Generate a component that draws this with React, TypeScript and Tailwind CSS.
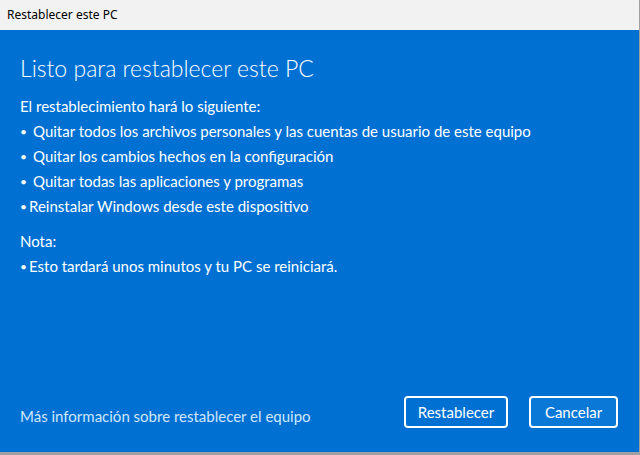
import React from 'react';

const font = { fontFamily: 'Lato, "Noto Sans", sans-serif' };

const Item = ({ gap, children }: { gap: string; children: React.ReactNode }) => (
  <p className="flex">
    <span className={`${gap} text-[12px] leading-[25px]`}>•</span>
    <span>{children}</span>
  </p>
);

export default function App() {
  return (
    <div className="w-[640px] h-[455px] bg-[#a0a0a0] flex flex-col" style={font}>
      <div className="w-[639px] h-[452px] flex flex-col">
        <div className="h-[30px] bg-[#f2f2f2] flex items-center px-[7px] text-[12px] text-black" style={{ fontFamily: '"Noto Sans", sans-serif' }}>
          Restablecer este PC
        </div>
        <div className="flex-1 bg-[#0071d3] text-white flex flex-col px-[20px]">
          <h1 className="mt-[20px] text-[23px] font-light leading-[36px]">Listo para restablecer este PC</h1>
          <div className="mt-[8px] text-[15px] leading-[25px]">
            <p>El restablecimiento hará lo siguiente:</p>
            <Item gap="w-[13px]">Quitar todos los archivos personales y las cuentas de usuario de este equipo</Item>
            <Item gap="w-[13px]">Quitar los cambios hechos en la configuración</Item>
            <Item gap="w-[13px]">Quitar todas las aplicaciones y programas</Item>
            <Item gap="w-[9px]">Reinstalar Windows desde este dispositivo</Item>
            <p className="mt-[10px]">Nota:</p>
            <Item gap="w-[9px]">Esto tardará unos minutos y tu PC se reiniciará.</Item>
          </div>
          <div className="mt-auto mb-[24px] flex items-center">
            <span className="text-[15px] text-[#cfe6fb] flex-1 pt-[8px]">Más información sobre restablecer el equipo</span>
            <button className="w-[104px] h-[32px] border-2 border-white rounded-[4px] text-[15px] text-white">Restablecer</button>
            <button className="ml-[21px] mr-[1px] w-[89px] h-[32px] border-2 border-white rounded-[4px] text-[15px] text-white bg-[#0a78d6]">Cancelar</button>
          </div>
        </div>
      </div>
    </div>
  );
}
